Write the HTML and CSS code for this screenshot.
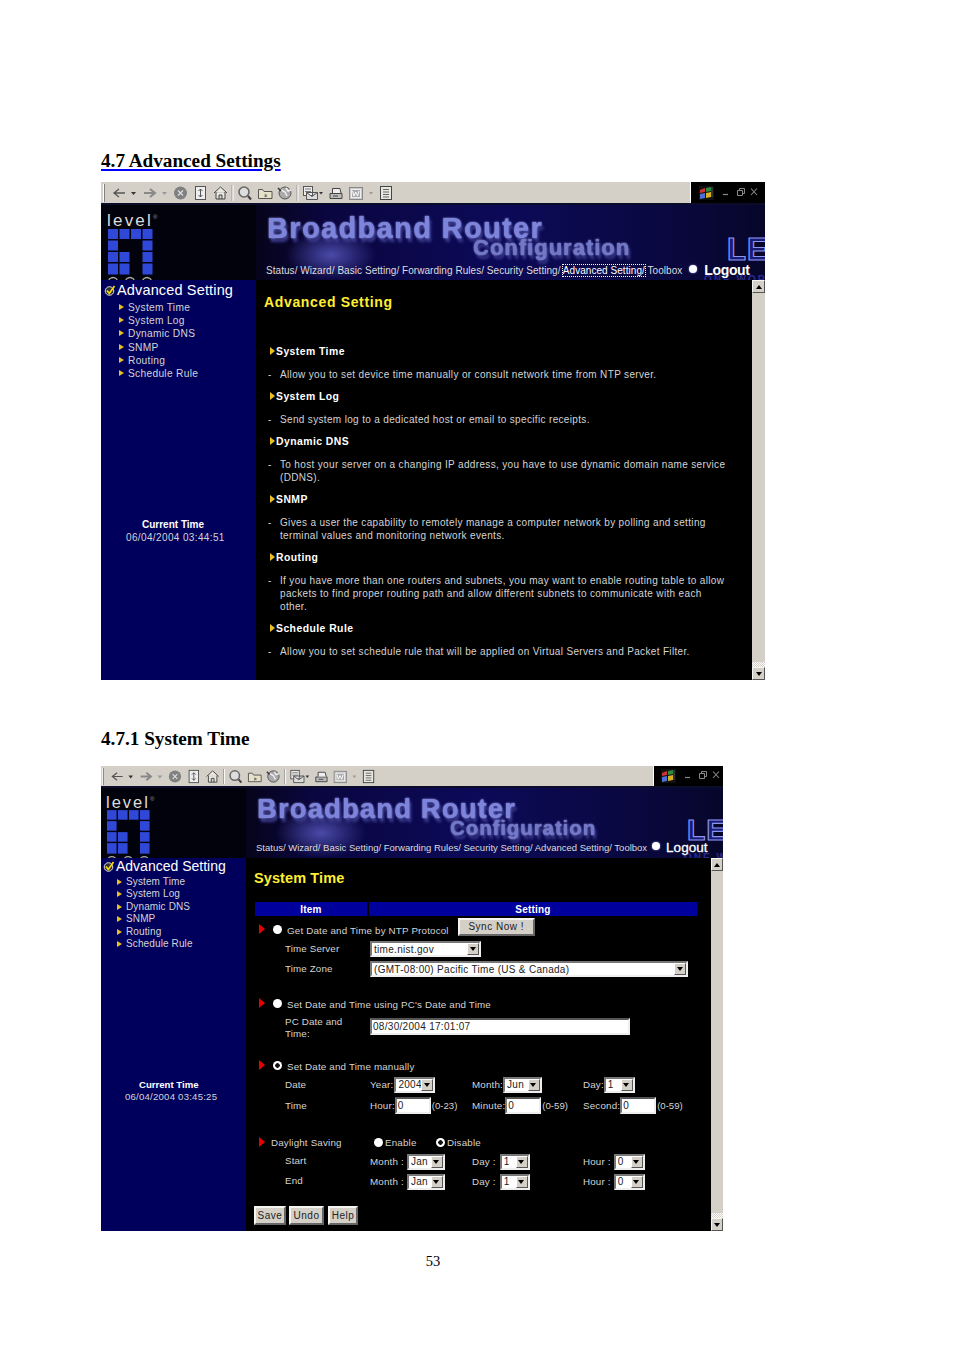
FILE: index.html
```html
<!DOCTYPE html>
<html lang="en">
<head>
<meta charset="utf-8">
<title>4.7 Advanced Settings</title>
<link rel="stylesheet" href="styles.css">
</head>
<body>
<svg class="defs" aria-hidden="true">
  <symbol id="tools" viewBox="0 0 292 20">
    <path d="M0.500 1v18" stroke="#fff" stroke-width="1"/><path d="M1.500 1v18" stroke="#808080" stroke-width="1"/>
    <path d="M12 10h10M16 6l-5 4 5 4" fill="none" stroke="#555" stroke-width="1.300"/>
    <path d="M28 9h5l-2.500 3z" fill="#333"/>
    <path d="M41 10h10M47 6l5 4-5 4" fill="none" stroke="#888" stroke-width="2"/>
    <path d="M59 9h5l-2.500 3z" fill="#999"/>
    <circle cx="77.500" cy="10" r="6.500" fill="#808080"/><path d="M75 7.500l5 5m0-5l-5 5" stroke="#ddd" stroke-width="1.200"/>
    <rect x="92.500" y="3.500" width="10" height="13" fill="#eee" stroke="#555"/><path d="M97.500 6v8M95.500 8l2-2 2 2M95.500 12l2 2 2-2" fill="none" stroke="#555"/>
    <path d="M111 10l6.500-6 6.500 6M113 9v7h9V9M116 16v-4h3v4" fill="#e8e8e0" stroke="#444"/>
    <path d="M129 2v16" stroke="#999"/><path d="M130 2v16" stroke="#fff"/>
    <circle cx="141" cy="9" r="5" fill="#ddd" stroke="#666" stroke-width="1.600"/><path d="M145 13l3 3.500" stroke="#444" stroke-width="2.200"/>
    <path d="M155.500 6.500h4l1.500 2h8v7h-13.500z" fill="#e6e2c8" stroke="#555"/><path d="M162 10.500l1 1.200 1.500-.2-.8 1.300.8 1.200-1.500-.2-1 .8-.6-1.200" fill="#777"/>
    <circle cx="182" cy="10" r="6" fill="#aaa" stroke="#555"/><path d="M178 7l4 2 2 4M183 5l2 3 3-1" fill="none" stroke="#eee" stroke-width="1.500"/><path d="M175 5l3 3" stroke="#333" stroke-width="1.500"/>
    <path d="M194 2v16" stroke="#999"/><path d="M195 2v16" stroke="#fff"/>
    <rect x="200.500" y="3.500" width="9" height="9" fill="#eee" stroke="#555"/><path d="M202 6h6M202 8.500h6" stroke="#777"/><path d="M203.500 9.500h11v7h-11zM203.500 9.500l5.500 4 5.500-4" fill="#ddd" stroke="#555"/>
    <path d="M216 9h4l-2 2.500z" fill="#333"/>
    <path d="M227 10.500h12v5h-12z" fill="#bbb" stroke="#444"/><path d="M229.500 10V5.500h7.500l1 4.500" fill="#eee" stroke="#444"/><path d="M230 13h5" stroke="#444"/>
    <rect x="246.500" y="4.500" width="13" height="12" fill="#c9c9c9" stroke="#888"/><rect x="248.500" y="6.500" width="9" height="8" fill="#aaa" stroke="#eee"/><path d="M249.500 8l1.500 5 1.700-4 1.800 4 1.500-5" fill="none" stroke="#fff"/>
    <path d="M266 9h4l-2 2.500z" fill="#999"/>
    <rect x="277.500" y="3.500" width="11" height="13" fill="#e8e8e0" stroke="#444"/><path d="M280 6.500h6M280 9h6M280 11.500h6M280 14h6" stroke="#666"/>
  </symbol>
  <symbol id="winlogo" viewBox="0 0 15 14">
    <rect width="15" height="14" fill="#111"/>
    <path d="M1 4l5-2v4l-5 1z" fill="#c33"/><path d="M7 2l5-1v4l-5 1z" fill="#2b8a3c"/>
    <path d="M1 8l5-1v5l-5 1z" fill="#4a6fd8"/><path d="M7 7l5-1v5l-5 1z" fill="#d8b020"/>
    <path d="M13 1v10" stroke="#556" stroke-width="1"/>
  </symbol>
  <symbol id="winbtns" viewBox="0 0 36 10">
    <path d="M1 7.500h5" stroke="#888" stroke-width="1.200"/>
    <path d="M15.500 3.500h5v5h-5zM17.500 3.500v-2h5v5h-2" fill="none" stroke="#888"/>
    <path d="M29 1.500l6 6.500m0-6.500l-6 6.500" stroke="#888" stroke-width="1.100"/>
  </symbol>
  <symbol id="levelgrid" viewBox="0 0 46 52">
    <g fill="#2f48d8">
      <rect x="0" y="0" width="10" height="10"/><rect x="11.500" y="0" width="10" height="10"/><rect x="23" y="0" width="10" height="10"/><rect x="34.500" y="0" width="10" height="10"/>
      <rect x="0" y="11.500" width="10" height="10"/><rect x="34.500" y="11.500" width="10" height="10"/>
      <rect x="0" y="23" width="10" height="10"/><rect x="11.500" y="23" width="10" height="10"/><rect x="34.500" y="23" width="10" height="10"/>
      <rect x="0" y="34.500" width="10" height="11"/><rect x="11.500" y="34.500" width="10" height="11"/><rect x="34.500" y="34.500" width="10" height="11"/>
    </g>
    <g fill="none" stroke="#aaa" stroke-width="1.300">
      <circle cx="5" cy="53" r="4.500"/><circle cx="22" cy="53" r="4.500"/><circle cx="39" cy="53" r="4.500"/>
    </g>
  </symbol>
  <symbol id="check" viewBox="0 0 12 11">
    <circle cx="5.500" cy="6" r="4.300" fill="#333" stroke="#ddd" stroke-width="1"/>
    <path d="M3 5.500l2.300 3 5.200-7.500" fill="none" stroke="#ffe000" stroke-width="1.600"/>
  </symbol>
</svg>

<main class="page">
  <h2 class="heading heading-main">4.7 Advanced Settings</h2>

  <section class="shot shot-a">
    <div class="toolbar">
      <svg class="strip"><use href="#tools"/></svg>
      <div class="winbox">
        <svg class="winlogo"><use href="#winlogo"/></svg>
        <svg class="winbtns"><use href="#winbtns"/></svg>
      </div>
    </div>
    <header class="banner">
      <div class="logo">
        <span class="logo-word">level<sup>®</sup></span>
        <svg class="logo-grid"><use href="#levelgrid"/></svg>
      </div>
      <div class="mast">
        <div class="glow"></div>
        <div class="mast-title">Broadband Router</div>
        <div class="mast-sub">Configuration</div>
        <span class="brand">LE</span>
        <span class="brand-tag">ONE WORLD</span>
        <nav class="nav">
          <span class="nav-links">Status/ Wizard/ Basic Setting/ Forwarding Rules/ Security Setting/ <span class="nav-active">Advanced Setting/</span> Toolbox</span>
          <span class="dot"></span>
          <span class="logout">Logout</span>
        </nav>
      </div>
    </header>
    <div class="work">
      <aside class="side">
        <div class="side-title"><svg class="check"><use href="#check"/></svg>Advanced Setting</div>
        <ul class="side-list">
          <li>System Time</li><li>System Log</li><li>Dynamic DNS</li><li>SNMP</li><li>Routing</li><li>Schedule Rule</li>
        </ul>
        <div class="clock"><b>Current Time</b><span>06/04/2004 03:44:51</span></div>
      </aside>
      <div class="content">
        <h1 class="page-title">Advanced Setting</h1>
        <div class="topic first"><b class="topic-head">System Time</b><p>Allow you to set device time manually or consult network time from NTP server.</p></div>
        <div class="topic"><b class="topic-head">System Log</b><p>Send system log to a dedicated host or email to specific receipts.</p></div>
        <div class="topic"><b class="topic-head">Dynamic DNS</b><p>To host your server on a changing IP address, you have to use dynamic domain name service<br>(DDNS).</p></div>
        <div class="topic"><b class="topic-head">SNMP</b><p>Gives a user the capability to remotely manage a computer network by polling and setting<br>terminal values and monitoring network events.</p></div>
        <div class="topic"><b class="topic-head">Routing</b><p>If you have more than one routers and subnets, you may want to enable routing table to allow<br>packets to find proper routing path and allow different subnets to communicate with each<br>other.</p></div>
        <div class="topic"><b class="topic-head">Schedule Rule</b><p>Allow you to set schedule rule that will be applied on Virtual Servers and Packet Filter.</p></div>
      </div>
      <div class="scroll"><span class="sb-btn sb-up"></span><span class="sb-track"></span><span class="sb-dither"></span><span class="sb-btn sb-down"></span></div>
    </div>
  </section>

  <h2 class="heading heading-sub">4.7.1 System Time</h2>

  <section class="shot shot-b">
    <div class="toolbar">
      <svg class="strip"><use href="#tools"/></svg>
      <div class="winbox">
        <svg class="winlogo"><use href="#winlogo"/></svg>
        <svg class="winbtns"><use href="#winbtns"/></svg>
      </div>
    </div>
    <header class="banner">
      <div class="logo">
        <span class="logo-word">level<sup>®</sup></span>
        <svg class="logo-grid"><use href="#levelgrid"/></svg>
      </div>
      <div class="mast">
        <div class="glow"></div>
        <div class="mast-title">Broadband Router</div>
        <div class="mast-sub">Configuration</div>
        <span class="brand">LE</span>
        <span class="brand-tag">ONE WORLD</span>
        <nav class="nav">
          <span class="nav-links">Status/ Wizard/ Basic Setting/ Forwarding Rules/ Security Setting/ Advanced Setting/ Toolbox</span>
          <span class="dot"></span>
          <span class="logout">Logout</span>
        </nav>
      </div>
    </header>
    <div class="work">
      <aside class="side">
        <div class="side-title"><svg class="check"><use href="#check"/></svg>Advanced Setting</div>
        <ul class="side-list">
          <li>System Time</li><li>System Log</li><li>Dynamic DNS</li><li>SNMP</li><li>Routing</li><li>Schedule Rule</li>
        </ul>
        <div class="clock"><b>Current Time</b><span>06/04/2004 03:45:25</span></div>
      </aside>
      <div class="content form">
        <h1 class="page-title">System Time</h1>
        <div class="thead"><b class="th-item">Item</b><b class="th-setting">Setting</b></div>

        <div class="row row-ntp"><i class="mark"></i><span class="radio"></span><span class="opt">Get Date and Time by NTP Protocol</span><button class="btn btn-sync">Sync Now !</button></div>
        <div class="grid row-server"><span class="cell-label">Time Server</span><span class="sel w111"><span class="val">time.nist.gov</span><i class="arr"></i></span></div>
        <div class="grid row-zone"><span class="cell-label">Time Zone</span><span class="sel w318"><span class="val">(GMT-08:00) Pacific Time (US &amp; Canada)</span><i class="arr"></i></span></div>

        <div class="row row-pc"><i class="mark"></i><span class="radio"></span><span class="opt">Set Date and Time using PC's Date and Time</span></div>
        <div class="grid row-pcdate"><span class="cell-label wrap">PC Date and Time:</span><span class="inp w260">08/30/2004 17:01:07</span></div>

        <div class="row row-man"><i class="mark"></i><span class="radio on"></span><span class="opt">Set Date and Time manually</span></div>
        <div class="grid grid4 row-date">
          <span class="cell-label">Date</span>
          <span class="pair">Year:<span class="sel w41"><span class="val">2004</span><i class="arr"></i></span></span>
          <span class="pair">Month:<span class="sel w39"><span class="val">Jun</span><i class="arr"></i></span></span>
          <span class="pair">Day:<span class="sel w31"><span class="val">1</span><i class="arr"></i></span></span>
        </div>
        <div class="grid grid4 row-time">
          <span class="cell-label">Time</span>
          <span class="pair">Hour:<span class="inp w36">0</span><small>(0-23)</small></span>
          <span class="pair">Minute:<span class="inp w36">0</span><small>(0-59)</small></span>
          <span class="pair">Second:<span class="inp w36">0</span><small>(0-59)</small></span>
        </div>

        <div class="row row-day"><i class="mark"></i><span class="opt opt-day">Daylight Saving</span><span class="radio"></span><span class="opt-en">Enable</span><span class="radio on"></span><span class="opt-dis">Disable</span></div>
        <div class="grid grid4 row-start">
          <span class="cell-label">Start</span>
          <span class="pair">Month :<span class="sel w38"><span class="val">Jan</span><i class="arr"></i></span></span>
          <span class="pair">Day :<span class="sel w30"><span class="val">1</span><i class="arr"></i></span></span>
          <span class="pair">Hour :<span class="sel w31"><span class="val">0</span><i class="arr"></i></span></span>
        </div>
        <div class="grid grid4 row-end">
          <span class="cell-label">End</span>
          <span class="pair">Month :<span class="sel w38"><span class="val">Jan</span><i class="arr"></i></span></span>
          <span class="pair">Day :<span class="sel w30"><span class="val">1</span><i class="arr"></i></span></span>
          <span class="pair">Hour :<span class="sel w31"><span class="val">0</span><i class="arr"></i></span></span>
        </div>

        <div class="actions"><button class="btn btn-save">Save</button><button class="btn btn-undo">Undo</button><button class="btn btn-help">Help</button></div>
      </div>
      <div class="scroll"><span class="sb-btn sb-up"></span><span class="sb-track"></span><span class="sb-dither"></span><span class="sb-btn sb-down"></span></div>
    </div>
  </section>

  <footer class="pageno">53</footer>
</main>
</body>
</html>
```
FILE: styles.css
```css
* { box-sizing: border-box; }
html, body { margin: 0; padding: 0; background: #fff; }
body { font-family: "Liberation Serif", serif; color: #000; }
.defs { position: absolute; width: 0; height: 0; overflow: hidden; }
.page { padding: 151px 0 0 101px; width: 954px; }

.heading { margin: 0; font: bold 19.2px/20px "Liberation Serif", serif; }
.heading-main { text-decoration: underline; text-decoration-color: #0000ff; text-decoration-thickness: 2px; text-underline-offset: 2px; margin-bottom: 11px; }
.heading-sub { margin: 49px 0 17px; }

.shot { font-family: "Liberation Sans", sans-serif; background: #000; }
.shot-a { width: 664px; height: 498px; }
.shot-b { width: 622px; height: 465px; }

/* toolbar */
.toolbar { display: flex; justify-content: space-between; background: #d4d0c8; }
.shot-a .toolbar { height: 21px; }
.shot-b .toolbar { height: 20px; }
.strip { display: block; align-self: center; flex: none; filter: blur(.3px); }
.shot-a .strip { width: 292px; height: 20px; margin-left: 2px; }
.shot-b .strip { width: 275px; height: 19px; margin-left: 1px; }
.winbox { display: flex; align-items: center; background: #000; border-left: 1px solid #fff; flex: none; }
.shot-a .winbox { width: 75px; padding-left: 8px; }
.shot-b .winbox { width: 70px; padding-left: 7px; }
.winlogo { width: 15px; height: 14px; }
.winbtns { width: 36px; height: 10px; margin: 0 0 2px 8px; }

/* banner */
.banner { display: flex; overflow: hidden; border-top: 2px solid #0b0b2a; background:
  linear-gradient(90deg, #000 0, #05030f 20%, #0a0640 34%, #0c0a58 60%, #0a0840 85%, #06062a 100%); }
.shot-a .banner { height: 77px; }
.shot-b .banner { height: 72px; }
.logo { flex: none; overflow: hidden; background: #02020c; }
.shot-a .logo { width: 155px; padding: 8px 0 0 6px; }
.shot-b .logo { width: 145px; padding: 6px 0 0 5px; }
.logo-word { display: block; color: #dcdcdc; font-weight: normal; }
.shot-a .logo-word { font-size: 17px; line-height: 16px; letter-spacing: 2.2px; }
.shot-b .logo-word { font-size: 16.500px; line-height: 16px; letter-spacing: 2px; }
.logo-word sup { font-size: 6px; letter-spacing: 0; vertical-align: 7px; line-height: 0; color: #999; }
.logo-grid { display: block; margin-left: 1px; }
.shot-a .logo-grid { width: 46px; height: 52px; }
.shot-b .logo-grid { width: 44px; height: 50px; }

.mast { position: relative; flex: 1; min-width: 0; }
.shot-a .mast { padding: 7px 0 0 11px; }
.shot-b .mast { padding: 6px 0 0 11px; }
.glow { position: absolute; left: 30px; bottom: 0; width: 90px; height: 50px; background: radial-gradient(closest-side, #4a4aa8, transparent); }
.mast-title, .mast-sub { position: relative; color: #7d84dc; font-weight: bold; white-space: nowrap; text-shadow: 0 0 2px #b0b4ff, 2px 4px 3px #3d3d90; filter: blur(.5px); }
.shot-a .mast-title { font-size: 29px; line-height: 32px; letter-spacing: 1.35px; }
.shot-b .mast-title { font-size: 27.5px; line-height: 30px; letter-spacing: 1.1px; }
.mast-sub { color: #7278c8; }
.shot-a .mast-sub { font-size: 22px; line-height: 22px; margin: -7px 0 0 206px; letter-spacing: 1px; }
.shot-b .mast-sub { font-size: 20.5px; line-height: 20px; margin: -6px 0 0 193px; letter-spacing: .9px; }
.nav { position: absolute; display: flex; align-items: center; white-space: nowrap; color: #dcdcdc; }
.shot-a .nav { left: 10px; bottom: 2px; font-size: 10px; letter-spacing: .05px; }
.shot-b .nav { left: 10px; bottom: 3px; font-size: 9.5px; }
.nav-active { outline: 1px dotted #fff; outline-offset: 0; color: #fff; }
.dot { width: 8px; height: 8px; border-radius: 50%; background: #fff; box-shadow: 0 0 2px #99f; margin: -3px 6px 0 5px; flex: none; }
.shot-a .dot { margin-left: 7px; }
.logout { font-weight: bold; color: #fff; }
.shot-a .logout { font-size: 14px; letter-spacing: -.35px; margin-left: 1px; }
.shot-b .logout { font-size: 13.500px; font-weight: normal; -webkit-text-stroke: .3px #fff; }
.brand, .brand-tag { position: absolute; font-weight: bold; white-space: nowrap; }
.brand { color: #1a1a70; -webkit-text-stroke: 1.200px #8a96f0; letter-spacing: 1px; }
.shot-a .brand { font-size: 31px; line-height: 30px; left: 471px; top: 30px; }
.shot-b .brand { font-size: 30px; line-height: 30px; left: 441px; top: 27px; }
.brand-tag { color: #2a2a90; font-size: 10px; line-height: 10px; letter-spacing: 2px; }
.shot-a .brand-tag { left: 448px; bottom: -5px; }
.shot-b .brand-tag { left: 438px; bottom: -5px; }

/* body of the screenshot */
.work { display: flex; }
.shot-a .work { height: 400px; }
.shot-b .work { height: 373px; }
.side { flex: none; background: #00005c; color: #d4d4d4; position: relative; display: flex; flex-direction: column; }
.shot-a .side { width: 155px; padding-top: 2px; }
.shot-b .side { width: 145px; padding-top: 0; }
.side-title { display: flex; align-items: center; color: #fff; white-space: nowrap; }
.shot-a .side-title { font-size: 14.5px; line-height: 16px; letter-spacing: .15px; padding-left: 3px; }
.shot-b .side-title { font-size: 14px; line-height: 16px; padding-left: 2px; }
.check { width: 12px; height: 11px; margin-right: 1px; flex: none; }
.side-list { list-style: none; margin: 0; padding: 0; }
.shot-a .side-list { padding: 3px 0 0 27px; font-size: 10.2px; letter-spacing: .3px; }
.shot-b .side-list { padding: 2px 0 0 25px; font-size: 10px; letter-spacing: .12px; }
.shot-a .side-list li { line-height: 13.2px; }
.shot-b .side-list li { line-height: 12.4px; }
.side-list li { position: relative; }
.side-list li::before { content: ""; position: absolute; left: -9px; top: 3px; border-left: 5px solid #e8c020; border-top: 3.500px solid transparent; border-bottom: 3.500px solid transparent; }
.clock { display: flex; flex-direction: column; font-size: 10px; white-space: nowrap; }
.clock b { color: #fff; }
.shot-a .clock { margin-top: 138px; padding-left: 25px; line-height: 13px; letter-spacing: .37px; }
.shot-a .clock b { padding-left: 16px; letter-spacing: 0; }
.shot-b .clock { margin-top: 129px; padding-left: 24px; font-size: 9.6px; line-height: 12px; letter-spacing: .22px; }
.shot-b .clock b { padding-left: 14px; letter-spacing: 0; }

.content { flex: 1; min-width: 0; background: #000; color: #d4d4d4; font-size: 10px; overflow: hidden; }
.shot-a .content { padding: 13px 0 0 8px; }
.page-title { margin: 0; color: #ffee33; font-size: 14px; line-height: 18px; font-weight: bold; letter-spacing: .65px; }

.topic { padding-left: 4px; }
.topic.first { margin-top: 34px; }
.topic-head { display: block; position: relative; padding-left: 8px; color: #fff; font-size: 10.4px; line-height: 13px; letter-spacing: .45px; }
.topic-head::before { content: ""; position: absolute; left: 2px; top: 2px; border-left: 5px solid #e8c020; border-top: 4.500px solid transparent; border-bottom: 4.500px solid transparent; }
.topic p { position: relative; margin: 10px 0 9px; padding-left: 12px; line-height: 13px; letter-spacing: .34px; white-space: nowrap; }
.topic p::before { content: "-"; position: absolute; left: 0; }

.scroll { flex: none; display: flex; flex-direction: column; background: #d4d0c8; }
.shot-a .scroll { width: 13px; }
.shot-b .scroll { width: 12px; }
.sb-track { flex: 1; background: #d4d0c8; }
.sb-dither { flex: none; height: 5px; background: repeating-conic-gradient(#fff 0 25%, #d4d0c8 0 50%) 0 0 / 2px 2px; }
.sb-btn { height: 13px; flex: none; position: relative; background: #d4d0c8; border: 1px solid; border-color: #f4f4f0 #555 #555 #f4f4f0; }
.sb-up::after, .sb-down::after { content: ""; position: absolute; left: 50%; top: 50%; transform: translate(-50%, -50%); border-left: 3.500px solid transparent; border-right: 3.500px solid transparent; }
.sb-up::after { border-bottom: 4px solid #000; }
.sb-down::after { border-top: 4px solid #000; }

/* form */
.form { padding: 11px 0 0 8px; font-size: 9.8px; letter-spacing: .17px; }
.form .page-title { font-size: 14.5px; letter-spacing: .1px; }
.thead { display: flex; gap: 2px; margin: 15px 0 0 1px; height: 14px; color: #fff; line-height: 15px; }
.thead b { display: block; background: #00009c; text-align: center; letter-spacing: .2px; font-size: 10px; }
.th-item { width: 112px; }
.th-setting { width: 328px; }

.row { display: flex; align-items: center; height: 16px; }
.mark { flex: none; width: 0; height: 0; margin: -1px 8px 0 5px; border-left: 6px solid #e80000; border-top: 5px solid transparent; border-bottom: 5px solid transparent; }
.radio { flex: none; width: 9px; height: 9px; border-radius: 50%; background: #fff; }
.radio.on { background: radial-gradient(circle, #111 0 2px, #fff 2.500px); }
.opt { margin-left: 5px; white-space: nowrap; padding-top: 3px; }
.opt-day { margin: 0; width: 103px; padding-top: 1px; }
.opt-en { width: 51px; margin-left: 2px; padding-top: 1px; }
.opt-dis { margin-left: 2px; padding-top: 1px; }
.row-day .mark { margin-right: 6px; }

.row-ntp { margin-top: 2px; height: 18px; }
.row-ntp .mark, .row-ntp .radio { margin-top: 4px; }
.row-ntp .opt { margin-top: 4px; }
.btn-sync { margin: 0 0 0 9px; width: 77px; height: 18px; letter-spacing: .2px; }
.row-pc { margin-top: 18px; }
.row-man { margin-top: 24px; }
.row-day { margin-top: 20px; }

.grid { display: grid; grid-template-columns: 85px 1fr; align-items: center; padding-left: 31px; white-space: nowrap; }
.grid4 { grid-template-columns: 85px 102px 111px 1fr; }
.row-server { margin-top: 5px; height: 16px; }
.row-zone { margin-top: 4px; height: 16px; }
.row-pcdate { margin-top: 2px; height: 20px; }
.row-date { margin-top: 3px; height: 17px; }
.row-time { margin-top: 4px; height: 17px; }
.row-start { margin-top: 3px; height: 17px; }
.row-end { margin-top: 3px; height: 17px; }
.cell-label { letter-spacing: .12px; margin-top: -2px; }
.row-date .cell-label, .row-time .cell-label { margin-top: 0; }
.cell-label.wrap { white-space: normal; width: 66px; line-height: 12px; margin-top: 3px; }
.pair { display: flex; align-items: center; }
.pair small { font-size: 9.6px; letter-spacing: 0; margin-left: 1px; }

.sel, .inp { display: inline-flex; align-items: center; flex: none; background: #fff; color: #222; letter-spacing: .3px; overflow: hidden; border: 2px solid; border-color: #777 #eee #eee #777; height: 17px; white-space: nowrap; font-size: 10px; }
.sel { height: 16px; padding-left: 2px; justify-content: space-between; }
.inp { padding-left: 1px; border-top-color: #555; }
.val { overflow: hidden; font-size: 10px; }
.arr { flex: none; position: relative; width: 12px; height: 12px; background: #d4d0c8; border: 1px solid; border-color: #fff #555 #555 #fff; }
.arr::after { content: ""; position: absolute; left: 1.500px; top: 3px; border-top: 4px solid #000; border-left: 3.500px solid transparent; border-right: 3.500px solid transparent; }
.w111 { width: 111px; } .w318 { width: 318px; } .w260 { width: 260px; } .w41 { width: 41px; margin-left: 1px; }
.w39 { width: 39px; margin-left: 0; } .w31 { width: 31px; margin-left: 0; } .w36 { width: 36px; margin-left: 0; }
.w38 { width: 38px; margin-left: 3px; } .w30 { width: 30px; margin-left: 4px; }
.row-start .w31, .row-end .w31 { margin-left: 3px; }

.btn { display: inline-block; padding: 0; background: #d4d0c8; color: #222; font: 10px/1 "Liberation Sans", sans-serif; letter-spacing: .5px; border: 2px solid; border-color: #f4f4f0 #666 #666 #f4f4f0; }
.actions { display: flex; margin-top: 16px; }
.btn-save { width: 32px; height: 19px; }
.btn-undo { width: 35px; height: 19px; margin-left: 3px; }
.btn-help { width: 30px; height: 19px; margin-left: 4px; }

.pageno { width: 664px; margin-top: 20px; text-align: center; font: 14.5px/20px "Liberation Serif", serif; }
```
